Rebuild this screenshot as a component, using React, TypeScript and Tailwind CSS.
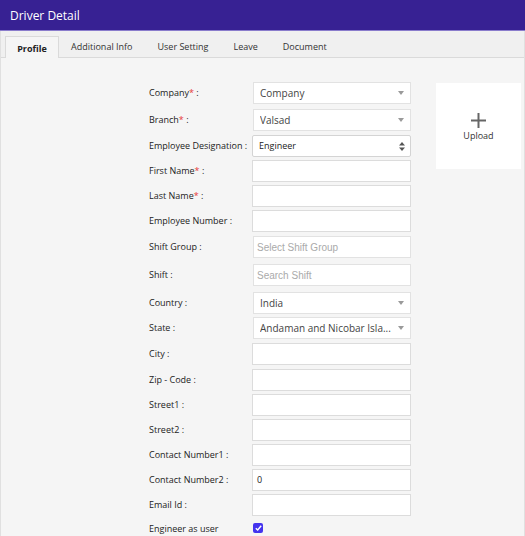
import React from "react";

type Row = {
  label: string;
  req?: boolean;
  kind: "input" | "dd" | "native" | "ph" | "check";
  value?: string;
  h: string;
};

const rows: Row[] = [
  { label: "Company", req: true, kind: "dd", value: "Company", h: "h-[27px]" },
  { label: "Branch", req: true, kind: "dd", value: "Valsad", h: "h-[26px]" },
  { label: "Employee Designation", kind: "native", value: "Engineer", h: "h-[25px]" },
  { label: "First Name", req: true, kind: "input", h: "h-[25px]" },
  { label: "Last Name", req: true, kind: "input", h: "h-[25px]" },
  { label: "Employee Number", kind: "input", h: "h-[26px]" },
  { label: "Shift Group", kind: "ph", value: "Select Shift Group", h: "h-[28px]" },
  { label: "Shift", kind: "ph", value: "Search Shift", h: "h-[28px]" },
  { label: "Country", kind: "dd", value: "India", h: "h-[25px]" },
  { label: "State", kind: "dd", value: "Andaman and Nicobar Isla...", h: "h-[26px]" },
  { label: "City", kind: "input", h: "h-[26px]" },
  { label: "Zip - Code", kind: "input", h: "h-[25px]" },
  { label: "Street1", kind: "input", h: "h-[25px]" },
  { label: "Street2", kind: "input", h: "h-[25px]" },
  { label: "Contact Number1", kind: "input", h: "h-[25px]" },
  { label: "Contact Number2", kind: "input", value: "0", h: "h-[25px]" },
  { label: "Email Id", kind: "input", h: "h-[28px]" },
  { label: "Engineer as user", kind: "check", h: "h-[14px]" },
];

function Field({ r }: { r: Row }) {
  if (r.kind === "dd") {
    return (
      <div className="w-[158px] h-[22px] bg-white border border-[#e2e2e2] flex items-center pl-[6px] pr-[6px]">
        <span className="flex-1 text-[10px] text-[#444] whitespace-nowrap overflow-hidden">{r.value}</span>
        <svg width="6" height="4" viewBox="0 0 6 4" className="ml-1">
          <path d="M0 0 L6 0 L3 4 Z" fill="#9a9a9a" />
        </svg>
      </div>
    );
  }
  if (r.kind === "native") {
    return (
      <div className="w-[159px] h-[22px] -ml-[1px] bg-white border border-[#d4d4d4] rounded-[2px] flex items-center pl-[6px] pr-[5px]">
        <span className="flex-1 text-[9px] text-[#222]">{r.value}</span>
        <svg width="6" height="9" viewBox="0 0 6 9">
          <path d="M0 3.5 L6 3.5 L3 0 Z" fill="#555" />
          <path d="M0 5.5 L6 5.5 L3 9 Z" fill="#555" />
        </svg>
      </div>
    );
  }
  if (r.kind === "ph") {
    return (
      <div className="w-[158px] h-[22px] bg-white border border-[#e2e2e2] flex items-center pl-[3px]">
        <span className="text-[10px] text-[#aaa] font-['Liberation_Sans',Arial,sans-serif]">{r.value}</span>
      </div>
    );
  }
  if (r.kind === "check") {
    return (
      <div className="w-[10px] h-[10px] rounded-[2px] bg-[#4433ee] flex items-center justify-center">
        <svg width="7" height="6" viewBox="0 0 7 6">
          <path d="M0.8 3.2 L2.7 5 L6.2 0.8" stroke="white" strokeWidth="1.4" fill="none" />
        </svg>
      </div>
    );
  }
  return (
    <div className="w-[159px] h-[22px] -ml-[1px] bg-white border border-[#dcdcdc] flex items-center pl-[4px]">
      <span className="text-[9px] text-[#222]">{r.value ?? ""}</span>
    </div>
  );
}

export default function App() {
  return (
    <div className="w-[525px] h-[536px] overflow-hidden bg-[#f5f5f5] font-['Open_Sans',sans-serif] flex flex-col">
      <div className="h-[30px] bg-[#372193] flex items-center pl-[10px] pt-[1px] shrink-0">
        <span className="text-white text-[12px]">Driver Detail</span>
      </div>
      <div className="h-[1px] bg-[#8a7ccc] shrink-0" />
      <div className="flex-1 flex flex-col border-l border-r border-[#e0e0e0]">
        <div className="h-[27px] bg-[#f0f0f0] border-b border-[#dadada] flex items-end pl-[4px] shrink-0">
          <div className="h-[22px] w-[54px] -mb-[1px] pt-[2px] bg-[#f5f5f5] border border-b-0 border-[#dadada] flex items-center justify-center text-[9px] font-bold text-[#222]">
            Profile
          </div>
          <div className="h-[22px] pt-[2px] flex items-center text-[9px] text-[#333] gap-[25px] pl-[12px]">
            <span>Additional Info</span>
            <span>User Setting</span>
            <span>Leave</span>
            <span>Document</span>
          </div>
        </div>
        <div className="flex pt-[24px] pl-[148px]">
          <div className="flex flex-col">
            {rows.map((r) => (
              <div key={r.label} className={`flex ${r.h}`}>
                <div className={`w-[104px] flex items-center text-[9px] text-[#222] whitespace-nowrap ${r.kind === "check" ? "h-[14px]" : "h-[22px]"}`}>
                  {r.label}
                  {r.req && <span className="text-[#e53935]">*</span>}
                  {r.kind !== "check" && <span>&nbsp;:</span>}
                </div>
                <div className={r.kind === "check" ? "pt-[1px]" : ""}>
                  <Field r={r} />
                </div>
              </div>
            ))}
          </div>
          <div className="ml-[25px] mt-[1px] w-[85px] h-[86px] bg-white flex flex-col items-center justify-center pt-[4px]">
            <svg width="15" height="15" viewBox="0 0 15 15">
              <path d="M7.5 0 V15 M0 7.5 H15" stroke="#666" strokeWidth="2" />
            </svg>
            <span className="text-[9px] text-[#333] mt-[1px]">Upload</span>
          </div>
        </div>
      </div>
    </div>
  );
}
